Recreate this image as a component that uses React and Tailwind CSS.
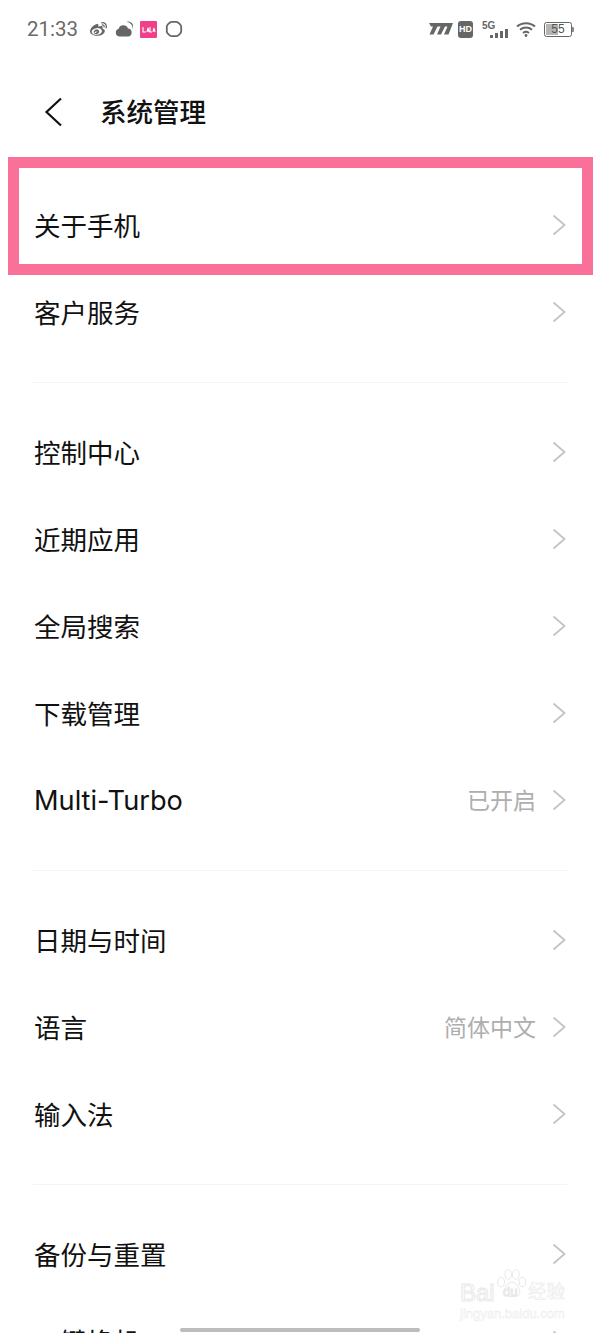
import React from "react";
import { FaWeibo } from "react-icons/fa";

const cjk = "font-['Inter','Noto_Sans_CJK_SC',sans-serif]";

function Chevron() {
  return (
    <svg width="16" height="24" viewBox="0 0 16 24" fill="none" className="shrink-0 -mt-px">
      <path d="M2.5 2.5 L13.5 12 L2.5 21.5" stroke="#c4c4c4" strokeWidth="1.8" />
    </svg>
  );
}

function Row({ label, value, latin }) {
  return (
    <div className="h-[87px] flex items-center justify-between">
      <span className={`${latin ? "text-[27.2px]" : "text-[26.5px]"} leading-none text-[#111] mt-px`}>{label}</span>
      <div className="flex items-center gap-[15px]">
        {value && <span className="text-[23px] leading-none text-[#aeaeae] mt-px">{value}</span>}
        <Chevron />
      </div>
    </div>
  );
}

function Divider() {
  return <div className="mt-[26px] mb-[26px] h-px ml-[-1px] bg-[#f3f3f3]" />;
}

function StatusBar() {
  return (
    <div className="h-[58px] pl-[27px] pr-[26px] flex items-center justify-between">
      <div className="flex items-center">
        <span className="text-[20.5px] leading-none text-[#6a6a6a] font-['Roboto',sans-serif]">21:33</span>
        <FaWeibo className="ml-[12px] text-[#666] text-[17px]" />
        <svg width="18" height="17" viewBox="0 0 18 17" className="ml-[8px]">
          <path d="M11 1 A6 6 0 0 1 17.5 8 A5 5 0 0 0 11 1Z" fill="#666" />
          <path d="M4.5 15.5 A4 4 0 0 1 3.6 7.7 A5 5 0 0 1 13 7.6 A4 4 0 0 1 13.5 15.5Z" fill="#666" />
        </svg>
        <div className="ml-[7px] w-[17px] h-[17px] bg-[#f0408a] rounded-[1px] flex flex-col items-center pt-[5px]">
          <svg width="14" height="7" viewBox="0 0 14 7">
            <path d="M1 1V6H4M5 6L6 2L7 6M8 1V6H10M11 6L11.9 2L13 6" stroke="#fff" strokeWidth="1.1" fill="none" />
          </svg>
        </div>
        <svg width="18" height="18" viewBox="0 0 18 18" className="ml-[8px]">
          <path d="M6.5 1.8 H11.5 C13 1.8 16.2 5 16.2 6.5 V11.5 C16.2 13 13 16.2 11.5 16.2 H6.5 C5 16.2 1.8 13 1.8 11.5 V6.5 C1.8 5 5 1.8 6.5 1.8Z" fill="none" stroke="#666" strokeWidth="1.8" />
        </svg>
      </div>
      <div className="flex items-center">
        <svg width="25" height="12" viewBox="0 0 25 12">
          <path d="M1 0H25L20.5 11.5H16L19.5 3.5H17L13 11.5H9L12.5 3.5H9.5L5.5 11.5H1.5L5 3.5H3Z" fill="#666" />
        </svg>
        <div className="ml-[5px] w-[15px] h-[17px] rounded-[3px] bg-[#666] flex items-center justify-center text-[9px] leading-none font-bold text-white font-['Liberation_Sans',sans-serif]">HD</div>
        <div className="relative ml-[9px] w-[26px] h-[17px]">
          <span className="absolute left-0 top-0 text-[10px] leading-none font-bold text-[#666] font-['Liberation_Sans',sans-serif]">5G</span>
          <div className="absolute right-0 bottom-0 flex items-end gap-[2px]">
            <div className="w-[3px] h-[3px] bg-[#666]" />
            <div className="w-[3px] h-[5px] bg-[#666]" />
            <div className="w-[3px] h-[7px] bg-[#666]" />
            <div className="w-[3px] h-[9px] bg-[#666]" />
          </div>
        </div>
        <svg width="20" height="16" viewBox="0 0 20 16" className="ml-[8px]">
          <path d="M1 5.5 C6 1 14 1 19 5.5" stroke="#666" strokeWidth="2" fill="none" />
          <path d="M4 8.8 C7.5 5.8 12.5 5.8 16 8.8" stroke="#666" strokeWidth="2" fill="none" />
          <path d="M7 12 C8.8 10.5 11.2 10.5 13 12" stroke="#666" strokeWidth="1.8" fill="none" />
          <circle cx="10" cy="14.5" r="1.4" fill="#666" />
        </svg>
        <div className="ml-[8px] flex items-center">
          <div className="relative w-[28px] h-[15px] border border-[#666] rounded-[2.5px] p-[1px]">
            <div className="w-[12px] h-full bg-[#b5b5b5]" />
            <span className="absolute inset-0 flex items-center justify-center text-[12px] leading-none text-[#555] font-['Liberation_Sans',sans-serif]">55</span>
          </div>
          <div className="w-[2px] h-[5px] bg-[#888] rounded-r-[1px]" />
        </div>
      </div>
    </div>
  );
}

function Watermark() {
  return (
    <div className="absolute left-[460px] top-[1268px] w-[110px] h-[60px] text-white [-webkit-text-stroke:1px_#e8e8e8] font-['Liberation_Sans',sans-serif]">
      <svg width="32" height="31" viewBox="0 0 34 31" className="absolute left-[36px] top-0" fill="none" stroke="#e6e6e6" strokeWidth="1">
        <ellipse cx="5.5" cy="14" rx="3.5" ry="5" />
        <ellipse cx="13" cy="6" rx="3.5" ry="5" />
        <ellipse cx="21" cy="6" rx="3.5" ry="5" />
        <ellipse cx="28" cy="14" rx="3.5" ry="5" />
        <path d="M17 14 C22 14 28 24 24 28 C20 30 14 30 10 28 C6 24 12 14 17 14Z" />
      </svg>
      <span className="absolute left-0 top-[13px] text-[24px] leading-none">Bai</span>
      <span className="absolute left-[43px] top-[17px] text-[13px] leading-none">du</span>
      <span className="absolute left-[68px] top-[13px] text-[18.5px] leading-none [-webkit-text-stroke:0.5px_#e8e8e8] font-['Noto_Sans_CJK_SC',sans-serif]">经验</span>
      <span className="absolute left-0 top-[39px] text-[13px] leading-none [-webkit-text-stroke:0.5px_#ececec]">jingyan.baidu.com</span>
    </div>
  );
}

export default function App() {
  return (
    <div className={`relative w-[600px] h-[1333px] overflow-hidden bg-white ${cjk}`}>
      <StatusBar />
      <div className="h-[108px] pl-[44px] flex items-center">
        <svg width="20" height="30" viewBox="0 0 20 30" fill="none">
          <path d="M17 1.5 L2.5 15 L17 28.5" stroke="#111" strokeWidth="2.2" />
        </svg>
        <span className="ml-[36px] text-[26.5px] leading-none font-medium text-[#111]">系统管理</span>
      </div>
      <div className="pt-[16px] pl-[34px] pr-[33px]">
        <Row label="关于手机" />
        <Row label="客户服务" />
        <Divider />
        <Row label="控制中心" />
        <Row label="近期应用" />
        <Row label="全局搜索" />
        <Row label="下载管理" />
        <Row label="Multi-Turbo" value="已开启" latin />
        <Divider />
        <Row label="日期与时间" />
        <Row label="语言" value="简体中文" />
        <Row label="输入法" />
        <Divider />
        <Row label="备份与重置" />
        <Row label="一键换机" />
      </div>
      <div className="absolute left-2 top-[157px] w-[585px] h-[118px] border-[11px] border-[#f97199]" />
      <Watermark />
      <div className="absolute left-[180px] top-[1328px] w-[240px] h-[4px] rounded-full bg-[#bcbcbc]" />
    </div>
  );
}
